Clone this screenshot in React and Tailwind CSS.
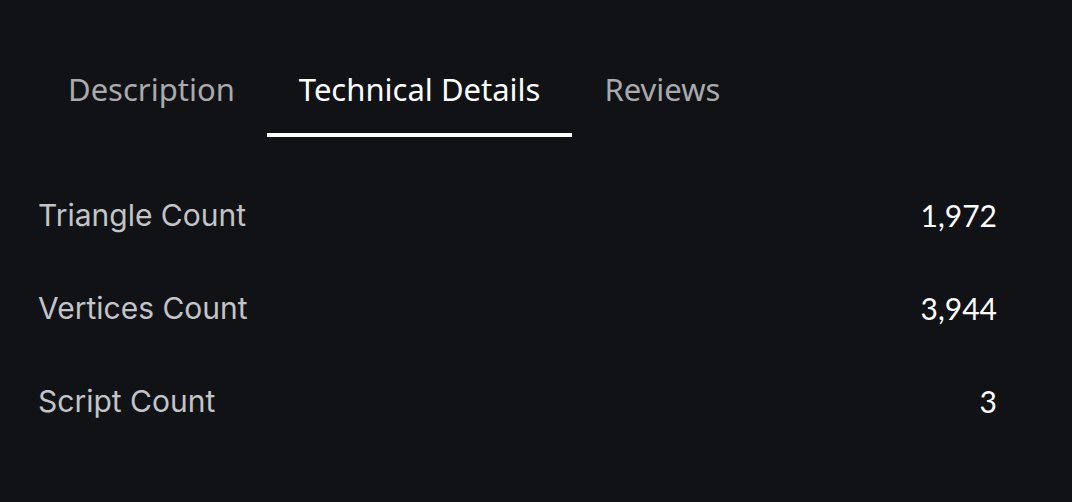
import React, { useState } from 'react';

const tabs = ['Description', 'Technical Details', 'Reviews'];

const details = [
  { label: 'Triangle Count', value: '1,972' },
  { label: 'Vertices Count', value: '3,944' },
  { label: 'Script Count', value: '3' },
];

export default function App() {
  const [active, setActive] = useState('Technical Details');

  return (
    <div className="min-h-screen w-full bg-[#111216] text-white">
      {/* Tabs */}
      <div className="flex pl-[36px] pt-[50px] font-['Noto_Sans',sans-serif]">
        {tabs.map(tab => (
          <button
            key={tab}
            onClick={() => setActive(tab)}
            className={`px-8 pt-[19px] pb-[24px] text-[31px] leading-[40px] border-b-4 ${
              active === tab ? 'text-white border-white' : 'text-[#a9aaae] border-transparent'
            }`}
          >
            {tab}
          </button>
        ))}
      </div>

      {/* Details list */}
      <div className="mt-[31px] pl-[38px] pr-[75px]">
        {details.map(row => (
          <div key={row.label} className="flex h-[93px] items-center justify-between text-[30px] leading-[40px]">
            <span className="font-['Inter',sans-serif] text-[#c3c4c8]">{row.label}</span>
            <span className="font-['Lato',sans-serif] text-white">{row.value}</span>
          </div>
        ))}
      </div>
    </div>
  );
}
